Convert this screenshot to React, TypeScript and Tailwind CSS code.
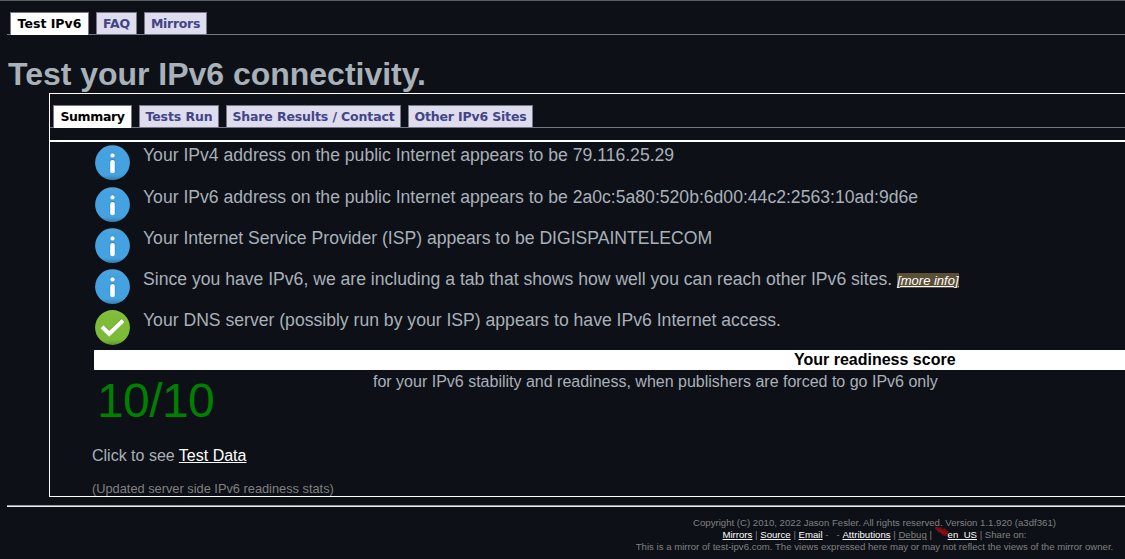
import type { ReactNode } from "react";

function Tab({ active, className, children }: { active?: boolean; className: string; children: ReactNode }) {
  return (
    <li
      className={`box-border flex shrink-0 items-center justify-center whitespace-nowrap border border-b-0 border-[#777788] font-[Verdana,'DejaVu_Sans',sans-serif] text-[12.5px] font-bold leading-[22px] ${
        active ? "mb-[-1px] h-[23px] bg-white pb-px text-black" : "h-[22px] bg-[#ddddee] text-[#444488]"
      } ${className}`}
    >
      {children}
    </li>
  );
}

function InfoIcon() {
  return (
    <svg width="35" height="36" viewBox="0 0 35 36" className="shrink-0">
      <defs>
        <linearGradient id="blue" x1="0" y1="0" x2="0" y2="1">
          <stop offset="0" stopColor="#55a4db" />
          <stop offset="0.15" stopColor="#45a2e0" />
          <stop offset="0.85" stopColor="#45a2e0" />
          <stop offset="1" stopColor="#347dad" />
        </linearGradient>
      </defs>
      <circle cx="17.5" cy="17.7" r="17.4" fill="url(#blue)" />
      <circle cx="17.5" cy="10.2" r="2.7" fill="#3187be" />
      <rect x="14.7" y="14" width="5.6" height="14.4" rx="2.4" fill="#3187be" />
      <circle cx="17.5" cy="10.4" r="2.2" fill="#fff" />
      <rect x="15.2" y="14.9" width="4.6" height="13.4" rx="2" fill="#fff" />
    </svg>
  );
}

function CheckIcon() {
  return (
    <svg width="35" height="36" viewBox="0 0 35 36" className="shrink-0">
      <defs>
        <linearGradient id="green" x1="0" y1="0" x2="0" y2="1">
          <stop offset="0" stopColor="#8abb4c" />
          <stop offset="0.15" stopColor="#7fbd38" />
          <stop offset="0.85" stopColor="#7bbb35" />
          <stop offset="1" stopColor="#5e9428" />
        </linearGradient>
      </defs>
      <circle cx="17.5" cy="17.5" r="17.4" fill="url(#green)" />
      <path d="M7 16.4 14.2 23.2 28 10" fill="none" stroke="#609a25" strokeWidth="4.8" />
      <path d="M7 16.8 14.2 23.8 28 10.6" fill="none" stroke="#fff" strokeWidth="4.2" />
    </svg>
  );
}

function Row({ ok, className, text, children }: { ok?: boolean; className: string; text: string; children?: ReactNode }) {
  return (
    <div className={`flex shrink-0 ${className}`}>
      {ok ? <CheckIcon /> : <InfoIcon />}
      <p className="ml-[13px] whitespace-nowrap text-[17.6px] leading-[20px]">
        {text}
        {children}
      </p>
    </div>
  );
}

function Link({ children }: { children: ReactNode }) {
  return <a className="text-white underline">{children}</a>;
}

export default function App() {
  return (
    <div className="flex h-[559px] w-[1125px] flex-col overflow-hidden border-t border-[#5b6063] bg-[#0d1017] font-[Arial,'Liberation_Sans',sans-serif] text-[#a9b1b8]">
      <ul className="ml-[7px] mt-[11px] flex h-[23px] shrink-0 gap-[7px] border-b border-[#777788] pl-[3px]">
        <Tab active className="w-[79px]">Test IPv6</Tab>
        <Tab className="w-[41px] tracking-[-0.1px]">FAQ</Tab>
        <Tab className="w-[63px] tracking-[-0.3px]">Mirrors</Tab>
      </ul>
      <h1 className="ml-2 mt-[20px] h-[38px] shrink-0 whitespace-nowrap text-[32px] font-bold leading-[38px] tracking-[-0.02px]">
        Test your IPv6 connectivity.
      </h1>
      <main className="ml-[49px] flex h-[404px] shrink-0 flex-col border-y border-l border-white">
        <ul className="mt-[11px] flex h-[23px] shrink-0 gap-[7px] border-b border-[#777788] pl-[3px]">
          <Tab active className="w-[79px] tracking-[-0.35px]">Summary</Tab>
          <Tab className="w-[80px] tracking-[-0.1px]">Tests Run</Tab>
          <Tab className="w-[175px] tracking-[-0.13px]">Share Results / Contact</Tab>
          <Tab className="w-[125px] tracking-[-0.17px]">Other IPv6 Sites</Tab>
        </ul>
        <section className="mt-[12px] flex flex-col border-t-2 border-white pl-[45px] pt-[3px]">
          <Row className="h-[42px]" text="Your IPv4 address on the public Internet appears to be 79.116.25.29" />
          <Row className="h-[41px]" text="Your IPv6 address on the public Internet appears to be 2a0c:5a80:520b:6d00:44c2:2563:10ad:9d6e" />
          <Row className="h-[41px]" text="Your Internet Service Provider (ISP) appears to be DIGISPAINTELECOM" />
          <Row className="h-[41px]" text="Since you have IPv6, we are including a tab that shows how well you can reach other IPv6 sites.">
            <a className="ml-[5px] bg-[#5a4e36] text-[13px] italic text-white underline">[more info]</a>
          </Row>
          <Row ok className="h-[40px]" text="Your DNS server (possibly run by your ISP) appears to have IPv6 Internet access." />
          <div className="-ml-px flex h-[20px] shrink-0 bg-white pl-[700px] text-[16px] font-bold leading-[20px] text-black">
            Your readiness score
          </div>
          <div className="flex h-[71px] shrink-0">
            <div className="w-[278px] pl-[2px] text-[48px] leading-[61px] tracking-[-0.6px] text-[#008000]">10/10</div>
            <p className="whitespace-nowrap text-[16px] leading-[24px]">
              for your IPv6 stability and readiness, when publishers are forced to go IPv6 only
            </p>
          </div>
          <p className="-ml-[3px] mt-[5px] text-[16px] leading-[20px]">
            Click to see <Link>Test Data</Link>
          </p>
          <p className="-ml-[3px] mt-[15px] text-[12.8px] leading-[16px] text-[#808080]">(Updated server side IPv6 readiness stats)</p>
        </section>
      </main>
      <div className="ml-[7px] mt-[8px] h-[2px] shrink-0 border-b border-t border-b-[#eeeeee] border-t-[#9a9a9a]" />
      <footer className="ml-[624px] mt-[10px] flex w-[501px] shrink-0 flex-col items-center whitespace-nowrap text-[9.6px] leading-[12px] tracking-[0.01px] text-[#808080]">
        <p>Copyright (C) 2010, 2022 Jason Fesler. All rights reserved. Version 1.1.920 (a3df361)</p>
        <p className="flex">
          <Link>Mirrors</Link>
          <span className="whitespace-pre"> | </span>
          <Link>Source</Link>
          <span className="whitespace-pre"> | </span>
          <Link>Email</Link>
          <span className="whitespace-pre"> -   - </span>
          <Link>Attributions</Link>
          <span className="whitespace-pre"> | </span>
          <a className="underline">Debug</a>
          <span className="whitespace-pre"> | </span>
          <svg width="13" height="12" viewBox="0 0 13 12" className="-mt-[2px]">
            <path d="M0 0h3l1 1 2-1 1 2 3-1 1 2 2 1v4l-3 1-3-1-1-2-3-1-1-2-2-1z" fill="#760b0e" />
            <path d="M2 2l2 2 2-1 1 3 3-1 1 2" fill="none" stroke="#a31515" strokeWidth="0.8" />
          </svg>
          <Link>en_US</Link>
          <span className="whitespace-pre"> | Share on:</span>
        </p>
        <p>This is a mirror of test-ipv6.com. The views expressed here may or may not reflect the views of the mirror owner.</p>
      </footer>
    </div>
  );
}
